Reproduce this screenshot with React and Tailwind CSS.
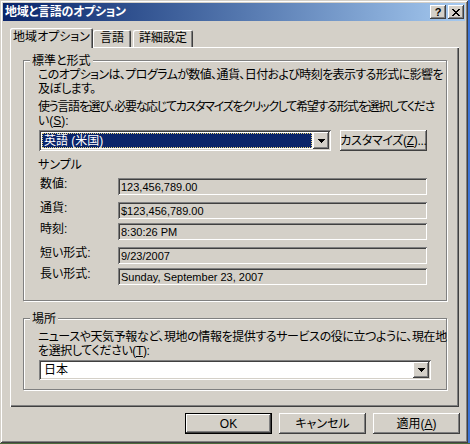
const raised =
  'shadow-[inset_-1px_-1px_#404040,inset_1px_1px_#fff,inset_-2px_-2px_#808080,inset_2px_2px_#d4d0c8]'
const sunken =
  'shadow-[inset_1px_1px_#808080,inset_-1px_-1px_#fff,inset_2px_2px_#404040,inset_-2px_-2px_#d4d0c8]'
const etched = 'border border-[#808080] shadow-[inset_1px_1px_#fff,1px_1px_#fff]'

function DownArrow() {
  return (
    <svg width="7" height="4" viewBox="0 0 7 4" shapeRendering="crispEdges">
      <path d="M0 0h7v1H0zM1 1h5v1H1zM2 2h3v1H2zM3 3h1v1H3z" fill="#000" />
    </svg>
  )
}

function ArrowButton() {
  return (
    <div className={`w-[16px] h-full bg-[#d4d0c8] flex items-center justify-center ${raised}`}>
      <DownArrow />
    </div>
  )
}

function TitleBar() {
  return (
    <div className="h-[18px] flex items-center justify-between bg-linear-to-r from-[#0a246a] to-[#a6caf0] pl-[2px] pr-[1px]">
      <span className="text-white font-bold text-[12px] leading-none tracking-[-0.3px]">地域と言語のオプション</span>
      <div className="flex gap-[2px]">
        <div className={`w-[16px] h-[14px] bg-[#d4d0c8] flex items-center justify-center text-[11px] font-bold leading-none ${raised}`}>
          ?
        </div>
        <div className={`w-[16px] h-[14px] bg-[#d4d0c8] flex items-center justify-center ${raised}`}>
          <svg width="8" height="7" viewBox="0 0 8 7" shapeRendering="crispEdges">
            <path d="M0 0h2v1H0zM6 0h2v1H6zM1 1h2v1H1zM5 1h2v1H5zM2 2h4v1H2zM3 3h2v1H3zM2 4h4v1H2zM1 5h2v1H1zM5 5h2v1H5zM0 6h2v1H0zM6 6h2v1H6z" fill="#000" />
          </svg>
        </div>
      </div>
    </div>
  )
}

function Tabs() {
  return (
    <div className="flex items-end h-[19px] mt-[7px] pl-[7px] leading-none">
      <div className="relative z-10 w-[83px] h-[20px] -mb-px bg-[#d4d0c8] rounded-t-[2px] shadow-[inset_1px_1px_#fff,inset_-1px_0_#404040,inset_-2px_0_#808080] flex items-center justify-center pb-[3px]">
        地域オプション
      </div>
      <div className="w-[38px] h-[17px] rounded-t-[2px] shadow-[inset_1px_1px_#fff,inset_-1px_0_#404040,inset_-2px_0_#808080] flex items-center justify-center pb-[1px]">
        言語
      </div>
      <div className="ml-[2px] w-[60px] h-[17px] rounded-t-[2px] shadow-[inset_1px_1px_#fff,inset_-1px_0_#404040,inset_-2px_0_#808080] flex items-center justify-center pb-[1px]">
        詳細設定
      </div>
    </div>
  )
}

const samples = [
  { label: '数値:', value: '123,456,789.00', mt: 'mt-[6px]' },
  { label: '通貨:', value: '$123,456,789.00', mt: 'mt-[7px]' },
  { label: '時刻:', value: '8:30:26 PM', mt: 'mt-[4px]' },
  { label: '短い形式:', value: '9/23/2007', mt: 'mt-[7px]' },
  { label: '長い形式:', value: 'Sunday, September 23, 2007', mt: 'mt-[4px]' },
]

function FormatGroup() {
  return (
    <div className={`w-[424px] h-[241px] flex flex-col ${etched}`}>
      <span className="-mt-[7px] ml-[6px] px-[2px] w-fit bg-[#d4d0c8] leading-[14px]">標準と形式</span>
      <div className="pl-[14px] leading-[14px] whitespace-nowrap flex flex-col">
        <p className="tracking-[-0.6px]">このオプションは、プログラムが数値、通貨、日付および時刻を表示する形式に影響を</p>
        <p className="tracking-[-0.6px]">及ぼします。</p>
        <p className="mt-[4px] tracking-[-1.3px]">使う言語を選び、必要な応じてカスタマイズをクリックして希望する形式を選択してくださ</p>
        <p>
          い(<span className="underline">S</span>):
        </p>
        <div className="mt-[2px] ml-[1px] flex items-start">
          <div className={`w-[292px] h-[21px] bg-white p-[2px] flex ${sunken}`}>
            <div className="flex-1 m-[1px] bg-[#0a246a] text-white border border-dotted border-[#e6d27a] flex items-center pl-[1px] leading-none">
              英語 (米国)
            </div>
            <ArrowButton />
          </div>
          <div className={`ml-[9px] w-[87px] h-[21px] bg-[#d4d0c8] flex items-center justify-center leading-none tracking-[-0.3px] ${raised}`}>
            カスタマイズ(<span className="underline">Z</span>)...
          </div>
        </div>
        <p className="mt-[7px]">サンプル</p>
        {samples.map((s) => (
          <div key={s.label} className={`flex items-start ${s.mt}`}>
            <span className="ml-[2px] w-[78px] leading-[13px]">{s.label}</span>
            <div className={`w-[309px] h-[17px] bg-[#d4d0c8] flex items-center pl-[3px] pt-[1px] text-[11px] leading-none ${sunken}`}>
              {s.value}
            </div>
          </div>
        ))}
      </div>
    </div>
  )
}

function LocationGroup() {
  return (
    <div className={`mt-[17px] w-[424px] h-[72px] flex flex-col ${etched}`}>
      <span className="-mt-[7px] ml-[6px] px-[2px] w-fit bg-[#d4d0c8] leading-[14px]">場所</span>
      <div className="pl-[14px] leading-[14px] whitespace-nowrap flex flex-col">
        <p className="mt-[4px] tracking-[-0.4px]">ニュースや天気予報など、現地の情報を提供するサービスの役に立つように、現在地</p>
        <p className="tracking-[-0.4px]">
          を選択してください(<span className="underline">T</span>):
        </p>
        <div className={`mt-[2px] ml-[1px] w-[392px] h-[20px] bg-white p-[2px] flex ${sunken}`}>
          <div className="flex-1 flex items-center pl-[3px] leading-none">日本</div>
          <ArrowButton />
        </div>
      </div>
    </div>
  )
}

function Panel() {
  return (
    <div className="ml-[7px] w-[449px] h-[360px] flex flex-col px-[13px] pt-[13px] shadow-[inset_1px_1px_#fff,inset_-1px_-1px_#404040,inset_-2px_-2px_#808080]">
      <FormatGroup />
      <LocationGroup />
    </div>
  )
}

function Buttons() {
  return (
    <div className="mt-[6px] flex justify-end gap-[7px] pr-[5px] leading-none">
      <div className="w-[87px] h-[21px] border border-black">
        <div className={`w-full h-full bg-[#d4d0c8] flex items-center justify-center ${raised}`}>OK</div>
      </div>
      <div className={`w-[87px] h-[21px] bg-[#d4d0c8] flex items-center justify-center ${raised}`}>キャンセル</div>
      <div className={`w-[87px] h-[21px] bg-[#d4d0c8] flex items-center justify-center ${raised}`}>
        適用(<span className="underline">A</span>)
      </div>
    </div>
  )
}

export default function App() {
  return (
    <div className="w-[470px] h-[444px] flex flex-col bg-[#4d6b3c] font-['Liberation_Sans','Noto_Sans_CJK_JP',sans-serif] text-[12px] text-black [font-feature-settings:'palt']">
      <div className="flex">
        <div className="w-[468px] h-[443px] bg-[#d4d0c8] p-[3px] flex flex-col shadow-[inset_1px_1px_#d4d0c8,inset_-1px_-1px_#404040,inset_2px_2px_#fff,inset_-2px_-2px_#808080]">
          <TitleBar />
          <Tabs />
          <Panel />
          <Buttons />
        </div>
        <div className="flex-1 h-[443px] bg-[#3d74d6]" />
      </div>
    </div>
  )
}
